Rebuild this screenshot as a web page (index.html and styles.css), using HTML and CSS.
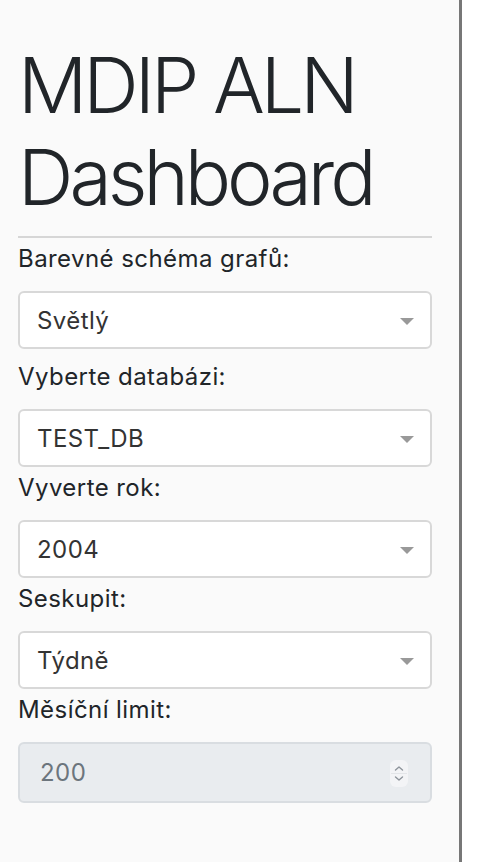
FILE: index.html
```html
<!DOCTYPE html>
<html lang="cs">
<head>
<meta charset="utf-8">
<title>MDIP ALN Dashboard</title>
<link rel="stylesheet" href="styles.css">
</head>
<body>
<div class="layout">
  <aside class="sidebar">
    <h1 class="title">MDIP ALN Dashboard</h1>
    <hr class="divider">
    <label class="label">Barevné schéma grafů:</label>
    <div class="dropdown first">
      <span class="value">Světlý</span>
      <span class="caret"></span>
    </div>
    <label class="label">Vyberte databázi:</label>
    <div class="dropdown">
      <span class="value">TEST_DB</span>
      <span class="caret"></span>
    </div>
    <label class="label">Vyverte rok:</label>
    <div class="dropdown">
      <span class="value">2004</span>
      <span class="caret"></span>
    </div>
    <label class="label">Seskupit:</label>
    <div class="dropdown">
      <span class="value">Týdně</span>
      <span class="caret"></span>
    </div>
    <label class="label">Měsíční limit:</label>
    <div class="number-input">
      <span class="number-value">200</span>
      <span class="spinner">
        <svg width="18" height="27" viewBox="0 0 18 27">
          <path d="M5.5 10 L9 7 L12.5 10" fill="none" stroke="#8e949b" stroke-width="1.4" stroke-linecap="round" stroke-linejoin="round"/>
          <line x1="1" y1="13.5" x2="17" y2="13.5" stroke="#e3e5e8" stroke-width="1"/>
          <path d="M5.5 17 L9 20 L12.5 17" fill="none" stroke="#8e949b" stroke-width="1.4" stroke-linecap="round" stroke-linejoin="round"/>
        </svg>
      </span>
    </div>
  </aside>
  <main class="main"></main>
</div>
</body>
</html>
```

FILE: styles.css
```css
html, body {
  margin: 0;
  padding: 0;
  background: #ffffff;
}

body {
  font-family: Inter, "Liberation Sans", sans-serif;
  color: #212529;
}

.layout {
  display: flex;
  min-height: 862px;
}

.sidebar {
  width: 414px;
  flex: none;
  background: #fafafa;
  border-right: 3px solid #777777;
  padding: 39px 27px 0 18px;
  display: flex;
  flex-direction: column;
  align-items: stretch;
}

.main {
  flex: 1;
  background: #ffffff;
}

.title {
  margin: 0;
  font-size: 77px;
  line-height: 92px;
  font-weight: 300;
  letter-spacing: -0.052em;
  color: #212529;
}

.divider {
  margin: 13px 0 3px;
  border: 0;
  height: 2px;
  background: #d6d6d6;
}

.label {
  display: block;
  font-size: 24px;
  line-height: 36px;
  letter-spacing: 0.018em;
  margin-bottom: 14px;
  color: #212529;
}

.dropdown {
  height: 58px;
  box-sizing: border-box;
  border: 2px solid #d8d8d8;
  border-radius: 6px;
  background: #ffffff;
  display: flex;
  align-items: center;
  justify-content: space-between;
  padding: 1px 16px 0 17px;
  margin-bottom: 3px;
}

.dropdown.first {
  margin-bottom: 10px;
}

.value {
  font-size: 24px;
  line-height: 36px;
  letter-spacing: 0.018em;
  color: #333333;
}

.caret {
  width: 0;
  height: 0;
  border-left: 7px solid transparent;
  border-right: 7px solid transparent;
  border-top: 7px solid #999999;
  margin-top: 1px;
}

.number-input {
  height: 61px;
  box-sizing: border-box;
  border: 2px solid #d9dde1;
  border-radius: 6px;
  background: #e9ecef;
  display: flex;
  align-items: center;
  justify-content: space-between;
  padding: 0 22px 0 20px;
}

.number-value {
  font-size: 24px;
  line-height: 36px;
  letter-spacing: 0.018em;
  color: #6c757d;
}

.spinner {
  display: flex;
  width: 18px;
  height: 27px;
  border-radius: 6px;
  background: #f3f4f6;
  margin-top: 2px;
}
```
